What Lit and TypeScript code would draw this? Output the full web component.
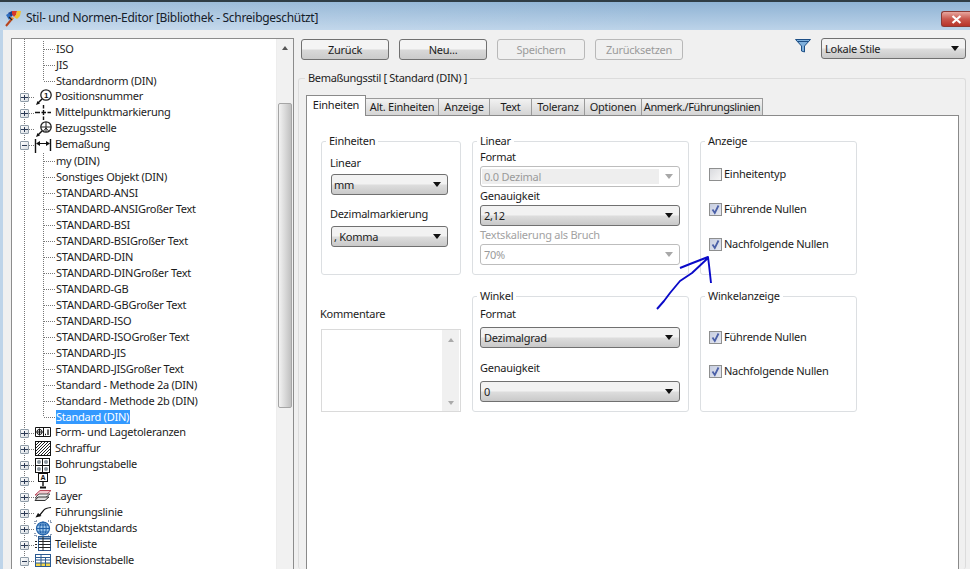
import { LitElement, html, css, svg } from "lit";
import { customElement } from "lit/decorators.js";

const ICONS: Record<string, unknown> = {
  pos: svg`<circle cx="11" cy="6" r="5.2" fill="#fff" stroke="#222" stroke-width="1.3"/><text x="11" y="9" font-size="8" font-weight="700" text-anchor="middle" font-family="Liberation Sans" fill="#111">1</text><path d="M7 10 3 14" stroke="#111" stroke-width="1.4"/><path d="M1 16 5 14.5 2.5 12Z" fill="#111"/>`,
  mid: svg`<path d="M0 7.5H5M6.5 7.5H11M12.5 7.5H16M8.5 0V3.5M8.5 5V10M8.5 11.5V15" stroke="#111" stroke-width="1.4"/>`,
  ref: svg`<circle cx="11" cy="6" r="5.2" fill="#fff" stroke="#222" stroke-width="1.3"/><path d="M11 1V11M6 6H16M8.5 10 11 7 13.5 10" stroke="#222" fill="none"/><path d="M7 10 3 14" stroke="#111" stroke-width="1.4"/><path d="M1 16 5 14.5 2.5 12Z" fill="#111"/>`,
  dim: svg`<path d="M.5 2V16M15.5 2V14" stroke="#111" stroke-width="1.4"/><path d="M2 6.5H14" stroke="#111"/><path d="M1 6.5 5 4V9ZM15 6.5 11 4V9Z" fill="#111"/>`,
  form: svg`<path d="M.5 2.5H15.5V11.5H.5Z" fill="#fff" stroke="#111"/><path d="M8.5 2.5V11.5" stroke="#111"/><circle cx="4.5" cy="7" r="2.6" fill="none" stroke="#111"/><path d="M4.5 3.5V10.5M1.5 7H7.5" stroke="#111"/><path d="M10 9.5H11M13 4.5V10" stroke="#111" stroke-width="1.3"/>`,
  hatch: svg`<rect x=".5" y=".5" width="15" height="14" fill="#fff" stroke="#111"/><path d="M1 4 4 1M1 7 7 1M1 10 10 1M1 13 13 1M3 14 15 2M6 14 15 5M9 14 15 8M12 14 15 11" stroke="#222"/>`,
  hole: svg`<rect x=".5" y="1.5" width="14" height="14" fill="#fff" stroke="#111"/><path d="M.5 8.5H14.5M7.5 1.5V15.5" stroke="#111"/><circle cx="4" cy="5" r="2" fill="#8a949c"/><circle cx="11" cy="5" r="2" fill="#8a949c"/><circle cx="4" cy="12" r="2" fill="#8a949c"/><circle cx="11" cy="12" r="2" fill="#8a949c"/>`,
  id: svg`<rect x="3.5" y=".5" width="9" height="8" fill="#fff" stroke="#111"/><text x="8" y="7" font-size="7" font-weight="700" text-anchor="middle" font-family="Liberation Sans" fill="#111">A</text><path d="M8 9V13" stroke="#111" stroke-width="1.4"/><path d="M5 14.5H11" stroke="#111" stroke-width="2"/>`,
  layer: svg`<path d="M5 1.5H16L11 6H0Z" fill="#f0c6cc" stroke="#b8485a"/><path d="M4 5H15L10 9H0Z" fill="#eee" stroke="#555"/><path d="M3 8H14L10 11.5H0Z" fill="#ddd" stroke="#333"/>`,
  lead: svg`<path d="M4 11 9 5C10 3.5 12 3 16 2.5" fill="none" stroke="#111" stroke-width="1.2"/><path d="M.5 12.5 3 8 6.5 11Z" fill="#111"/>`,
  obj: svg`<circle cx="8" cy="7.5" r="6.5" fill="#9cc6ec" stroke="#1f5fa8" stroke-width="1.2"/><path d="M1.5 7.5H14.5M2.6 4H13.4M2.6 11H13.4M8 1V14" stroke="#1f5fa8"/><ellipse cx="8" cy="7.5" rx="3.2" ry="6.5" fill="none" stroke="#1f5fa8"/><path d="M0 3V0H3M13 0H16V3M0 12V15H3M13 15H16V12" fill="none" stroke="#1c3f6e" stroke-dasharray="1 1"/>`,
  parts: svg`<rect x="3.5" y="-.5" width="12" height="14" fill="#fff" stroke="#2a5a92"/><path d="M3.5 1.5H15.5" stroke="#2a5a92" stroke-width="2"/><path d="M3.5 4.5H15.5M3.5 7.5H15.5M3.5 10.5H15.5M8 0V13.5" stroke="#222"/><path d="M0 4.5H2M0 7.5H2M0 10.5H2" stroke="#222"/>`,
  rev: svg`<rect x=".5" y="1.5" width="15" height="12" fill="#fff" stroke="#2a5a92"/><rect x="1" y="10" width="14" height="3" fill="#f3d64a"/><path d="M.5 4.5H15.5M.5 7H15.5M.5 10H15.5M6 1.5V13.5M10.5 4.5V13.5" stroke="#2a5a92"/>`,
};

type Row = { kind: "parent"; label: string; icon: string; open?: boolean } | { kind: "group"; items: string[] };

const TREE: Row[] = [
  { kind: "group", items: ["ISO", "JIS", "Standardnorm (DIN)"] },
  { kind: "parent", label: "Positionsnummer", icon: "pos" },
  { kind: "parent", label: "Mittelpunktmarkierung", icon: "mid" },
  { kind: "parent", label: "Bezugsstelle", icon: "ref" },
  { kind: "parent", label: "Bemaßung", icon: "dim", open: true },
  {
    kind: "group",
    items: [
      "my (DIN)", "Sonstiges Objekt (DIN)", "STANDARD-ANSI", "STANDARD-ANSIGroßer Text", "STANDARD-BSI",
      "STANDARD-BSIGroßer Text", "STANDARD-DIN", "STANDARD-DINGroßer Text", "STANDARD-GB", "STANDARD-GBGroßer Text",
      "STANDARD-ISO", "STANDARD-ISOGroßer Text", "STANDARD-JIS", "STANDARD-JISGroßer Text",
      "Standard - Methode 2a (DIN)", "Standard - Methode 2b (DIN)", "Standard (DIN)",
    ],
  },
  { kind: "parent", label: "Form- und Lagetoleranzen", icon: "form" },
  { kind: "parent", label: "Schraffur", icon: "hatch" },
  { kind: "parent", label: "Bohrungstabelle", icon: "hole" },
  { kind: "parent", label: "ID", icon: "id" },
  { kind: "parent", label: "Layer", icon: "layer" },
  { kind: "parent", label: "Führungslinie", icon: "lead" },
  { kind: "parent", label: "Objektstandards", icon: "obj" },
  { kind: "parent", label: "Teileliste", icon: "parts" },
  { kind: "parent", label: "Revisionstabelle", icon: "rev", open: true },
];

const SELECTED = "Standard (DIN)";
const TABS = ["Einheiten", "Alt. Einheiten", "Anzeige", "Text", "Toleranz", "Optionen", "Anmerk./Führungslinien"];
const TAB_W = [60, 73, 51, 42, 53, 57, 121];

@customElement("app-root")
export class AppRoot extends LitElement {
  static styles = css`
    :host { display: block; width: 970px; height: 569px; overflow: hidden; position: relative; font: 11px/14px "Noto Sans", sans-serif; letter-spacing: -0.25px; color: #1c1c1c; background: #bed4e9; }
    svg { display: block; overflow: visible; }
    fieldset { margin: 0; min-width: 0; padding: 0; border: 1px solid #dcdfe2; border-radius: 3px; }
    legend { padding: 0 3px; margin-left: -4px; line-height: 14px; }

    .title { height: 28px; border-top: 2px solid #2f3d45; display: flex; padding-left: 5px; background: linear-gradient(to right, rgba(255,255,255,.18), rgba(255,255,255,0) 70%), linear-gradient(to bottom, #8fb3d4, #bcd3e9); }
    .logo { margin: 8px 5px 0 0; }
    .title-text { font-size: 12px; line-height: 16px; margin-top: 8px; color: #15202a; letter-spacing: -0.29px; }
    .close { margin: 9px 0 0 auto; width: 29px; height: 16px; box-sizing: border-box; border: 1px solid #8c3b36; border-right: 0; border-radius: 3px 0 0 3px; background: linear-gradient(to bottom, #e8a79f, #c9584e 50%, #b8342a); display: flex; align-items: center; justify-content: center; }

    .body { height: 539px; margin-left: 3px; display: flex; overflow: hidden; background: #f0f0f0; }
    .tree { width: 283px; box-sizing: border-box; margin: 8px 0 -20px 8px; border: 1px solid #8c8c8c; background: #fff; display: flex; flex: none; }
    .tree-list { width: 264px; box-sizing: border-box; padding-top: 2px; background: repeating-linear-gradient(to bottom, #777 0 1px, transparent 1px 2px) 12px 0 / 1px 100% no-repeat; }
    .group { background: repeating-linear-gradient(to bottom, #777 0 1px, transparent 1px 2px) 31px 0 / 1px calc(100% - 8px) no-repeat; }
    .row { height: 16px; box-sizing: border-box; display: flex; align-items: center; white-space: nowrap; }
    .row.parent { padding: 0 0 2px 8px; }
    .row.parent > svg { margin-bottom: -2px; }
    .row.leaf { padding-left: 32px; }
    .exp { width: 9px; height: 9px; box-sizing: border-box; border: 1px solid #8f9ca8; border-radius: 1px; background: linear-gradient(135deg, #fff, #d8dde2); flex: none; display: flex; align-items: center; justify-content: center; margin-bottom: -2px; }
    .exp::before { content: ""; width: 5px; height: 1px; background: #2b3a55; }
    .exp.plus { background: linear-gradient(to bottom, transparent 0 3px, #2b3a55 3px 4px, transparent 4px) , linear-gradient(135deg, #fff, #d8dde2); }
    .exp.plus::before { width: 1px; height: 5px; }
    .conn { flex: none; height: 1px; background: repeating-linear-gradient(to right, #777 0 1px, transparent 1px 2px); }
    .row.parent .conn { width: 6px; margin-bottom: -2px; }
    .row.leaf .conn { width: 11px; margin-right: 1px; }
    .row.parent .label { margin-left: 4px; }
    .sel { background: #3399ff; color: #fff; padding-right: 1px; }

    .sb { width: 17px; flex: none; background: #f1f1f1; border-left: 1px solid #ededed; box-sizing: border-box; display: flex; flex-direction: column; align-items: center; }
    .sb-up { margin-top: 7px; width: 0; height: 0; border: 3.5px solid transparent; border-top: 0; border-bottom: 4px solid #555; }
    .thumb { margin-top: 53px; width: 14px; height: 305px; box-sizing: border-box; border: 1px solid #a5a5a5; border-radius: 2px; background: linear-gradient(to right, #f2f2f2, #dcdcdc 45%, #c0c0c0); }

    .right { width: 668px; margin-left: 4px; flex: none; display: flex; flex-direction: column; }
    .toolbar { height: 22px; margin-top: 8px; padding-left: 3px; display: flex; align-items: flex-start; }
    .btn { height: 21px; width: 88px; margin: 1px 10px 0 0; box-sizing: border-box; border: 1px solid #707070; border-radius: 3px; background: linear-gradient(to bottom, #f4f4f4 0 45%, #d8d8d8 55%, #cbcbcb); display: flex; align-items: center; justify-content: center; }
    .btn.off { border-color: #b8b8b8; background: #f0f0f0; color: #9b9b9b; }
    .funnel { margin: 1px 10px 0 auto; }
    .combo { height: 21px; box-sizing: border-box; border: 1px solid #707070; border-radius: 3px; background: linear-gradient(to bottom, #f2f2f2 0 45%, #dcdcdc 55%, #c9c9c9); display: flex; align-items: center; padding: 0 6px 0 3px; flex: none; }
    .combo span { flex: 1; }
    .combo i { width: 0; height: 0; border: 4px solid transparent; border-bottom: 0; border-top: 5px solid #111; }
    .combo.off { border-color: #bdbdbd; background: #fff; color: #9a9a9a; }
    .combo.off i { border-top-color: #a8a8a8; }
    .combo.off span.fill { background: #eeeeee; height: 15px; margin: 0 6px 0 -2px; padding-left: 2px; line-height: 15px; }
    .combo.wide { width: 200px; }
    .combo.short { width: 117px; padding-left: 2px; }
    .combo.top { width: 145px; margin-top: 0; }

    .frame { margin-top: 11px; padding: 10px 6px 0 7px; flex: 1; border-bottom: 0; border-color: #dcdcdc; display: flex; flex-direction: column; min-height: 0; }
    .frame > legend { margin-left: -1px; letter-spacing: -0.33px; }
    .tabs { display: flex; align-items: flex-end; height: 20px; flex: none; }
    .tab { height: 17px; box-sizing: border-box; border: 1px solid #9a9a9a; border-bottom: 0; border-left: 0; background: linear-gradient(to bottom, #f2f2f2, #d4d4d4); display: flex; align-items: center; justify-content: center; }
    .tab:last-child { letter-spacing: -0.42px; }
    .tab.on { height: 21px; margin-bottom: -1px; border-left: 1px solid #8a8a8a; border-color: #8a8a8a; background: #fff; position: relative; padding-bottom: 2px; }
    .panel { flex: 1; min-height: 600px; border: 1px solid #8a8a8a; background: #fff; padding: 18px 0 0 14px; display: grid; grid-template-columns: 140px 217px 157px; grid-template-rows: 141px 123px; column-gap: 11px; row-gap: 14px; align-content: start; }

    .stack { display: flex; flex-direction: column; }
    .units { padding: 8px 0 0 8px; align-items: flex-start; }
    .units .c { margin: 4px 0 12px 1px; }
    .units .d { margin: 5px 0 0 1px; }
    .linear { padding: 2px 8px 0 7px; gap: 2px; }
    .linear legend, .angle legend { margin-left: -3px; }
    .dim { color: #a2a2a2; }
    .angle { padding: 4px 8px 0 7px; }
    .angle .combo { margin: 6px 0 13px; }
    .checks { padding: 19px 0 0 8px; gap: 21px; }
    .checks.tight { padding-top: 27px; gap: 20px; }
    .check { height: 14px; display: flex; align-items: center; gap: 2px; }
    .box { width: 13px; height: 13px; box-sizing: border-box; border: 1px solid #8e8f8f; background: linear-gradient(135deg, #d9dade, #f6f6f6); flex: none; }
    .box.on { background: linear-gradient(135deg, #c6cde0, #e6e8f0); }

    .comments { display: flex; flex-direction: column; padding-top: 18px; }
    .comments label { margin: 0 0 8px -1px; }
    .memo { flex: 1; border: 1px solid #dadada; background: #fff; display: flex; justify-content: flex-end; }
    .memo-sb { width: 17px; background: #f0f0f0; display: flex; flex-direction: column; align-items: center; justify-content: space-between; padding: 8px 0 6px; box-sizing: border-box; margin-right: 1px; }
    .memo-sb .u { width: 0; height: 0; border: 3.5px solid transparent; border-top: 0; border-bottom: 4px solid #aaa; }
    .memo-sb .n { width: 0; height: 0; border: 3.5px solid transparent; border-bottom: 0; border-top: 4px solid #aaa; }

    .arrow { position: absolute; left: 0; top: 0; pointer-events: none; }
  `;

  private check(label: string, on: boolean) {
    return html`<div class="check"><span class="box ${on ? "on" : ""}">${on
      ? html`<svg width="11" height="11"><path d="M2.5 5.5 4.8 9 8.5 1.5" fill="none" stroke="#4b60a8" stroke-width="1.8"/></svg>`
      : ""}</span><span>${label}</span></div>`;
  }

  private combo(text: string, cls: string) {
    return html`<div class="combo ${cls}"><span class="${cls.includes("fillme") ? "fill" : ""}">${text}</span><i></i></div>`;
  }

  private renderRow(r: Row) {
    if (r.kind === "group") {
      return html`<div class="group">${r.items.map(
        (t) => html`<div class="row leaf"><span class="conn"></span><span class="${t === SELECTED ? "sel" : ""}">${t}</span></div>`
      )}</div>`;
    }
    return html`<div class="row parent"><span class="exp ${r.open ? "" : "plus"}"></span><span class="conn"></span><svg width="16" height="16" viewBox="0 0 16 16">${ICONS[r.icon]}</svg><span class="label">${r.label}</span></div>`;
  }

  render() {
    return html`
      <div class="title">
        <svg class="logo" width="16" height="17" viewBox="0 0 16 17"><path d="M3 3 7 1l2 3-3 3z" fill="#1f3f8f"/><path d="M7 1h5l-1 4-2 2-2-3z" fill="#d8392b"/><path d="M12 1h4l-1 5-3 3-3-2 2-2z" fill="#f2c230"/><path d="M1 5 4 3l2 4-2 3z" fill="#2f6fc0"/><path d="M6 7l3 1-2 3-2-1z" fill="#e8862a"/><path d="M6 10 1 16" stroke="#b8451f" stroke-width="2"/><path d="M4 7 7 10" stroke="#222" stroke-width="1.2"/></svg>
        <span class="title-text">Stil- und Normen-Editor [Bibliothek - Schreibgeschützt]</span>
        <div class="close"><svg width="11" height="9"><path d="M1.5 1 9.5 8M9.5 1 1.5 8" stroke="#fff" stroke-width="2.2"/></svg></div>
      </div>
      <div class="body">
        <div class="tree">
          <div class="tree-list">${TREE.map((r) => this.renderRow(r))}</div>
          <div class="sb"><span class="sb-up"></span><div class="thumb"></div></div>
        </div>
        <div class="right">
          <div class="toolbar">
            <div class="btn">Zurück</div>
            <div class="btn">Neu...</div>
            <div class="btn off">Speichern</div>
            <div class="btn off">Zurücksetzen</div>
            <svg class="funnel" width="16" height="14" viewBox="0 0 16 14"><path d="M.5.5H15.5L9.5 7V13L6.5 12V7Z" fill="#7fb0dc" stroke="#1d4f86"/><path d="M2.5 2.5H13.5" stroke="#1d4f86"/></svg>
            <div class="combo top"><span>Lokale Stile</span><i></i></div>
          </div>
          <fieldset class="frame">
            <legend>Bemaßungsstil [ Standard (DIN) ]</legend>
            <div class="tabs">
              ${TABS.map((t, i) => html`<div class="tab ${i === 0 ? "on" : ""}" style="width:${TAB_W[i]}px">${t}</div>`)}
            </div>
            <div class="panel">
              <fieldset class="stack units">
                <legend>Einheiten</legend>
                <div>Linear</div>
                <div class="c">${this.combo("mm", "short")}</div>
                <div>Dezimalmarkierung</div>
                <div class="d">${this.combo(", Komma", "short")}</div>
              </fieldset>
              <fieldset class="stack linear">
                <legend>Linear</legend>
                <div>Format</div>
                ${this.combo("0.0 Dezimal", "wide off fillme")}
                <div>Genauigkeit</div>
                ${this.combo("2,12", "wide")}
                <div class="dim">Textskalierung als Bruch</div>
                ${this.combo("70%", "wide off")}
              </fieldset>
              <fieldset class="stack checks">
                <legend>Anzeige</legend>
                ${this.check("Einheitentyp", false)}
                ${this.check("Führende Nullen", true)}
                ${this.check("Nachfolgende Nullen", true)}
              </fieldset>
              <div class="comments">
                <label>Kommentare</label>
                <div class="memo"><div class="memo-sb"><span class="u"></span><span class="n"></span></div></div>
              </div>
              <fieldset class="stack angle">
                <legend>Winkel</legend>
                <div>Format</div>
                ${this.combo("Dezimalgrad", "wide")}
                <div>Genauigkeit</div>
                ${this.combo("0", "wide")}
              </fieldset>
              <fieldset class="stack checks tight">
                <legend>Winkelanzeige</legend>
                ${this.check("Führende Nullen", true)}
                ${this.check("Nachfolgende Nullen", true)}
              </fieldset>
            </div>
          </fieldset>
        </div>
      </div>
      <svg class="arrow" width="970" height="569"><path d="M657 309 664 301 670 293 680 281 692 273 708 258M680 268 690 264 708 257 709 265 711 283" fill="none" stroke="#0a0ac8" stroke-width="1.9" stroke-linejoin="round"/></svg>
    `;
  }
}
